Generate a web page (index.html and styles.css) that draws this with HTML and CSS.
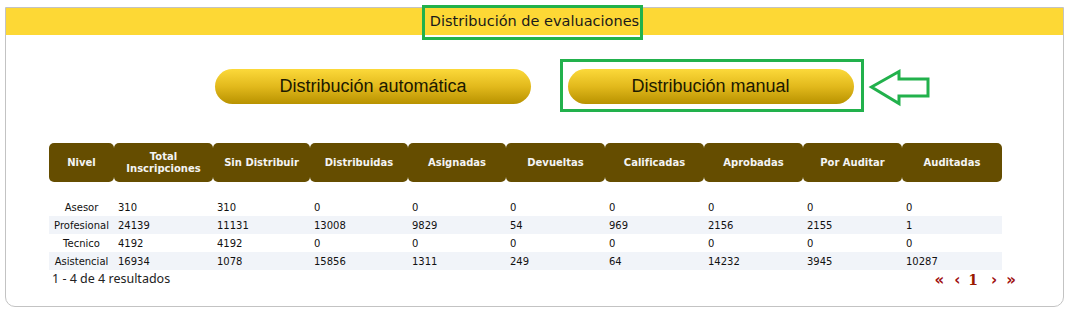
FILE: index.html
```html
<!DOCTYPE html>
<html lang="es">
<head>
    <meta charset="UTF-8">
    <meta name="viewport" content="width=device-width, initial-scale=1.0">
    <title>Distribución de evaluaciones</title>
    <link rel="stylesheet" href="styles.css">
</head>
<body>
    <div class="panel">
        <div class="panel-title">Distribución de evaluaciones</div>
        <div class="actions">
            <button class="btn-dist">Distribución automática</button>
            <button class="btn-dist">Distribución manual</button>
        </div>
        <table class="grid">
            <thead>
                <tr>
                    <th style="width:65px">Nivel</th>
                    <th style="width:99px">Total<br>Inscripciones</th>
                    <th style="width:97px">Sin Distribuir</th>
                    <th style="width:98px">Distribuidas</th>
                    <th style="width:98px">Asignadas</th>
                    <th style="width:99px">Devueltas</th>
                    <th style="width:99px">Calificadas</th>
                    <th style="width:99px">Aprobadas</th>
                    <th style="width:99px">Por Auditar</th>
                    <th style="width:100px">Auditadas</th>
                </tr>
            </thead>
            <tbody>
                <tr class="spacer"><td colspan="10"></td></tr>
                <tr>
                    <td class="nivel">Asesor</td><td>310</td><td>310</td><td>0</td><td>0</td><td>0</td><td>0</td><td>0</td><td>0</td><td>0</td>
                </tr>
                <tr class="alt">
                    <td class="nivel">Profesional</td><td>24139</td><td>11131</td><td>13008</td><td>9829</td><td>54</td><td>969</td><td>2156</td><td>2155</td><td>1</td>
                </tr>
                <tr>
                    <td class="nivel">Tecnico</td><td>4192</td><td>4192</td><td>0</td><td>0</td><td>0</td><td>0</td><td>0</td><td>0</td><td>0</td>
                </tr>
                <tr class="alt">
                    <td class="nivel">Asistencial</td><td>16934</td><td>1078</td><td>15856</td><td>1311</td><td>249</td><td>64</td><td>14232</td><td>3945</td><td>10287</td>
                </tr>
            </tbody>
        </table>
        <div class="grid-footer">
            <span class="results">1 - 4 de 4 resultados</span>
            <span class="pager">
                <a class="first">&laquo;</a>
                <a class="prev">&lsaquo;</a>
                <a class="page">1</a>
                <a class="next">&rsaquo;</a>
                <a class="last">&raquo;</a>
            </span>
        </div>
    </div>

    <!-- anotaciones -->
    <div class="mark mark-title"></div>
    <div class="mark mark-manual"></div>
    <svg class="mark-arrow" width="64" height="40" viewBox="868 68 64 40">
        <polygon points="871.5,87 899,71.5 899,79 928,79 928,96 899,96 899,103.5" fill="none" stroke="#22b14c" stroke-width="3" stroke-linejoin="miter"/>
    </svg>
</body>
</html>
```

FILE: styles.css
```css
body { margin: 0; padding: 7px 7px 0 5px; font-family: "DejaVu Sans", Verdana, sans-serif; background: #fff; position: relative; }

.panel {
    border: 1px solid #c3c3c3;
    border-radius: 0 0 10px 10px;
    height: 298px;
}

.panel-title {
    background-color: #fdd835;
    height: 27px;
    line-height: 27px;
    text-align: center;
    font-size: 14.5px;
    color: #1a1a1a;
}

.actions {
    display: flex;
    justify-content: center;
    gap: 37px;
    margin-top: 34px;
}

.btn-dist {
    height: 35px;
    padding: 0 64px;
    border: none;
    border-radius: 18px;
    background: linear-gradient(to bottom, #fcd93a 0%, #e2b91c 50%, #b89200 100%);
    font-family: "Liberation Sans", Arial, sans-serif;
    font-size: 18px;
    color: #1c1a00;
}

.grid {
    margin: 39px 0 0 43px;
    width: 953px;
    border-collapse: separate;
    border-spacing: 0;
    table-layout: fixed;
    font-size: 10px;
}

.grid th {
    background-color: #654d00;
    color: #f4f4f4;
    font-weight: bold;
    font-size: 10px;
    height: 39px;
    padding: 0;
    border-radius: 5px;
    text-align: center;
    line-height: 12px;
}

.grid td {
    height: 18px;
    padding: 0 0 0 4px;
    color: #111;
    white-space: nowrap;
}

.grid td.nivel { text-align: center; padding: 0; }
.grid tr.spacer td { height: 16px; }
.grid tr.alt td { background-color: #f1f4f9; }

.grid-footer {
    display: flex;
    justify-content: space-between;
    align-items: center;
    width: 964px;
    margin: -2px 0 0 46px;
}

.results { font-family: "Noto Sans", sans-serif; font-size: 12.5px; color: #222; }

.pager { display: flex; align-items: center; padding-top: 4px; }
.pager a { color: #a01010; font-weight: bold; font-size: 15px; line-height: 16px; }
.pager a.prev { margin-left: 10px; }
.pager a.page { font-size: 14px; font-family: "DejaVu Serif", serif; color: #9a1a00; margin-left: 8px; }
.pager a.next { margin-left: 13px; }
.pager a.last { margin-left: 9px; }

.mark { position: absolute; border: 3px solid #22b14c; box-sizing: border-box; }
.mark-title { left: 422px; top: 5px; width: 221px; height: 35px; }
.mark-manual { left: 560px; top: 59px; width: 304px; height: 53px; }
.mark-arrow { position: absolute; left: 868px; top: 68px; }
```
